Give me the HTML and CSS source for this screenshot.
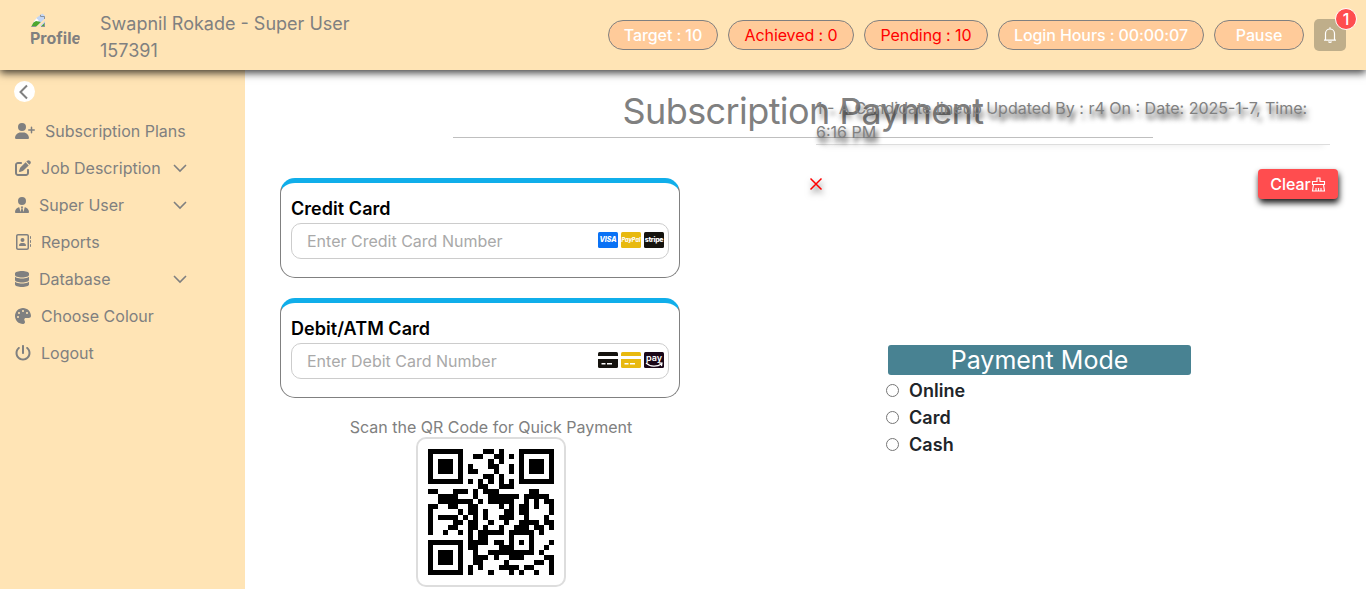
FILE: index.html
```html
<!DOCTYPE html>
<html lang="en">
<head>
<meta charset="utf-8">
<title>Subscription Payment</title>
<link rel="stylesheet" href="styles.css">
</head>
<body>
<header class="topbar">
  <div class="avatar">
    <svg class="avatar-icon" width="16" height="16" viewBox="0 0 16 16"><path fill="#c3d6f5" d="M1 1h10l4 4v10H1z"/><path fill="#fff" d="M3 9a2 2 0 0 1 4-1 2 2 0 0 1 1 3H3z"/><path fill="#4ea72e" d="M1 16v-3l5-3 5 1-5 5z"/><path fill="#ffe4b5" d="M6 16 15.500 7v2.500L9 16z"/><path fill="#4ea72e" d="M11 15.500l4-4v4z"/><path fill="none" stroke="#8c939c" d="M10.500 1.500v4h4M14.500 5.500V8M11 15.500h3.500V12M1 15.500h5"/></svg>
    <span class="avatar-alt">Profile</span>
  </div>
  <div class="who"><div>Swapnil Rokade - Super User</div><div>157391</div></div>
  <div class="stats">
    <div class="pill target">Target : 10</div>
    <div class="pill alert achieved">Achieved : 0</div>
    <div class="pill alert pending">Pending : 10</div>
    <div class="pill hours">Login Hours : 00:00:07</div>
    <div class="pill pause">Pause</div>
    <div class="bell">
      <svg width="16" height="18" viewBox="0 0 16 18" fill="none" stroke="#fff" stroke-width="1.200"><path d="M2 14.200h12M3.500 14V7.500a4.500 4.500 0 0 1 9 0V14M8 3V1.200M6.500 15.500a1.600 1.300 0 0 0 3 0"/></svg>
      <span class="badge">1</span>
    </div>
  </div>
</header>
<div class="shell">
  <nav class="sidebar">
    <div class="collapse"><svg width="21" height="21" viewBox="0 0 21 21" fill="none" stroke="#808080" stroke-width="2"><path d="M13 4.500 6.500 11l6.500 6.500"/></svg></div>
    <a class="item"><svg width="20" height="16" viewBox="0 0 640 512"><path d="M96 128a128 128 0 1 1 256 0A128 128 0 1 1 96 128zM0 482.300C0 383.800 79.800 304 178.300 304h91.400C368.200 304 448 383.800 448 482.300c0 16.400-13.300 29.700-29.700 29.700H29.700C13.300 512 0 498.700 0 482.300zM504 312V248H440c-13.300 0-24-10.700-24-24s10.700-24 24-24h64V136c0-13.300 10.700-24 24-24s24 10.700 24 24v64h64c13.300 0 24 10.700 24 24s-10.700 24-24 24H552v64c0 13.300-10.700 24-24 24s-24-10.700-24-24z"/></svg><span>Subscription Plans</span></a>
    <a class="item"><svg width="16" height="16" viewBox="0 0 512 512"><path d="M471.600 21.700c-21.900-21.900-57.300-21.900-79.200 0L362.300 51.700l97.900 97.900 30.100-30.100c21.900-21.900 21.900-57.300 0-79.200L471.600 21.700zm-299.200 220c-6.100 6.100-10.800 13.600-13.500 21.900l-29.600 88.800c-2.900 8.600-.6 18.100 5.800 24.600s15.900 8.700 24.600 5.800l88.800-29.600c8.200-2.700 15.700-7.400 21.900-13.500L437.700 172.300 339.700 74.300 172.400 241.700zM96 64C43 64 0 107 0 160V416c0 53 43 96 96 96H352c53 0 96-43 96-96V320c0-17.700-14.300-32-32-32s-32 14.300-32 32v96c0 17.700-14.300 32-32 32H96c-17.700 0-32-14.300-32-32V160c0-17.700 14.300-32 32-32h96c17.700 0 32-14.300 32-32s-14.300-32-32-32H96z"/></svg><span>Job Description</span><svg class="chev" width="14" height="16" viewBox="0 0 14 16"><path d="M1 5l6 6 6-6"/></svg></a>
    <a class="item"><svg width="14" height="16" viewBox="0 0 448 512"><path d="M96 128a128 128 0 1 0 256 0A128 128 0 1 0 96 128zm94.500 200.200l18.600 31L175.800 483.100l-36-146.900c-2-8.100-9.800-13.400-17.900-11.300C51.900 342.400 0 405.800 0 481.300c0 17 13.800 30.700 30.700 30.700H417.300c17 0 30.700-13.800 30.700-30.700c0-75.500-51.900-138.900-121.900-156.400c-8.100-2-15.900 3.300-17.900 11.300l-36 146.900L238.900 359.200l18.600-31c6.400-10.700-1.300-24.200-13.700-24.200H204.300c-12.400 0-20.100 13.600-13.700 24.200z"/></svg><span>Super User</span><svg class="chev" width="14" height="16" viewBox="0 0 14 16"><path d="M1 5l6 6 6-6"/></svg></a>
    <a class="item"><svg width="16" height="16" viewBox="0 0 512 512"><path d="M384 48c8.800 0 16 7.200 16 16V448c0 8.800-7.200 16-16 16H96c-8.800 0-16-7.200-16-16V64c0-8.800 7.200-16 16-16H384zM96 0C60.700 0 32 28.700 32 64V448c0 35.300 28.700 64 64 64H384c35.300 0 64-28.700 64-64V64c0-35.300-28.700-64-64-64H96zM240 256a64 64 0 1 0 0-128 64 64 0 1 0 0 128zm-32 32c-44.200 0-80 35.800-80 80c0 8.800 7.200 16 16 16H336c8.800 0 16-7.200 16-16c0-44.200-35.800-80-80-80H208zM512 80c0-8.800-7.200-16-16-16s-16 7.200-16 16v64c0 8.800 7.200 16 16 16s16-7.200 16-16V80zM496 192c-8.800 0-16 7.200-16 16v64c0 8.800 7.200 16 16 16s16-7.200 16-16V208c0-8.800-7.200-16-16-16zm16 144c0-8.800-7.200-16-16-16s-16 7.200-16 16v64c0 8.800 7.200 16 16 16s16-7.200 16-16V336z"/></svg><span>Reports</span></a>
    <a class="item"><svg width="14" height="16" viewBox="0 0 448 512"><path d="M448 80v48c0 44.200-100.300 80-224 80S0 172.200 0 128V80C0 35.800 100.300 0 224 0S448 35.800 448 80zM393.200 214.700c20.800-7.400 39.900-16.900 54.800-28.600V288c0 44.200-100.300 80-224 80S0 332.200 0 288V186.100c14.900 11.800 34 21.200 54.800 28.600C99.700 230.700 159.500 240 224 240s124.300-9.300 169.200-25.300zM0 346.100c14.900 11.800 34 21.200 54.800 28.600C99.700 390.700 159.500 400 224 400s124.300-9.300 169.200-25.300c20.800-7.400 39.900-16.900 54.800-28.600V432c0 44.200-100.300 80-224 80S0 476.200 0 432V346.100z"/></svg><span>Database</span><svg class="chev" width="14" height="16" viewBox="0 0 14 16"><path d="M1 5l6 6 6-6"/></svg></a>
    <a class="item"><svg width="16" height="16" viewBox="0 0 512 512"><path d="M512 256c0 .9 0 1.800 0 2.700c-.4 36.500-33.600 61.300-70.100 61.300H344c-26.500 0-48 21.500-48 48c0 3.400 .4 6.700 1 9.900c2.100 10.200 6.500 20 10.800 29.900c6.100 13.800 12.100 27.500 12.100 42c0 31.800-21.600 60.700-53.400 62c-3.500 .1-7 .2-10.600 .2C114.600 512 0 397.400 0 256S114.600 0 256 0S512 114.600 512 256zM128 288a32 32 0 1 0 -64 0 32 32 0 1 0 64 0zm0-96a32 32 0 1 0 0-64 32 32 0 1 0 0 64zM288 96a32 32 0 1 0 -64 0 32 32 0 1 0 64 0zm96 96a32 32 0 1 0 0-64 32 32 0 1 0 0 64z"/></svg><span>Choose Colour</span></a>
    <a class="item"><svg width="16" height="16" viewBox="0 0 512 512"><path d="M288 32c0-17.700-14.300-32-32-32s-32 14.300-32 32V256c0 17.700 14.300 32 32 32s32-14.300 32-32V32zM143.500 120.600c13.600-11.300 15.400-31.500 4.100-45.100s-31.500-15.400-45.100-4.100C49.700 115.400 16 181.800 16 256c0 132.500 107.500 240 240 240s240-107.500 240-240c0-74.200-33.800-140.600-86.600-184.600c-13.600-11.300-33.800-9.400-45.100 4.100s-9.400 33.800 4.100 45.100c38.900 32.300 63.500 81 63.500 135.400c0 97.200-78.800 176-176 176s-176-78.800-176-176c0-54.400 24.700-103.100 63.500-135.400z"/></svg><span>Logout</span></a>
  </nav>
  <main class="content">
    <h1 class="title">Subscription Payment</h1>
    <div class="columns">
      <section class="methods">
        <div class="card">
          <div class="label">Credit Card</div>
          <div class="field"><span>Enter Credit Card Number</span>
            <div class="brands">
              <span class="brand visa">VISA</span><span class="brand paypal">PayPal</span><span class="brand stripe">stripe</span>
            </div>
          </div>
        </div>
        <div class="card">
          <div class="label">Debit/ATM Card</div>
          <div class="field"><span>Enter Debit Card Number</span>
            <div class="brands">
              <svg width="20" height="16" viewBox="0 0 20 16"><rect width="20" height="16" rx="1.500" fill="#15130e"/><path fill="#fff" d="M0 4h20v3H0zM3.500 11h4v1.500h-4zM9 11h5v1.500H9z"/></svg>
              <svg width="20" height="16" viewBox="0 0 20 16"><rect width="20" height="16" rx="1.500" fill="#e8b90f"/><path fill="#fff" d="M0 4h20v3H0zM3.500 11h4v1.500h-4zM9 11h5v1.500H9z"/></svg>
              <span class="brand amazon">pay<svg width="18" height="6" viewBox="0 0 18 6" fill="none" stroke="#fff" stroke-width="1.200"><path d="M1 1c4 4 11 4 15.500 1M14 .8l3 .3-.5 3"/></svg></span>
            </div>
          </div>
        </div>
        <div class="scan">Scan the QR Code for Quick Payment</div>
        <div class="qr"><svg id="qr" width="126" height="126" viewBox="0 0 25 25" shape-rendering="crispEdges"></svg></div>
      </section>
      <section class="mode">
        <h2 class="mode-title">Payment Mode</h2>
        <label class="option"><input type="radio" name="mode">Online</label>
        <label class="option"><input type="radio" name="mode">Card</label>
        <label class="option"><input type="radio" name="mode">Cash</label>
      </section>
    </div>
  </main>
</div>
<aside class="notice">
  <p class="notice-text">1 - A Candidate lineup Updated By : r4 On : Date: 2025-1-7, Time: 6:16 PM</p>
  <div class="notice-actions">
    <svg class="dismiss" width="14" height="14" viewBox="0 0 14 14"><path d="M1.500 1.500l11 11M12.500 1.500l-11 11" stroke="red" stroke-width="1.500"/></svg>
    <button class="clear">Clear<svg width="15" height="15" viewBox="0 0 15 15" fill="none" stroke="#fff" stroke-width="1.100"><path d="M6 4.500V1h3v3.500h4.500v3h-12v-3zM2.500 7.500 1.500 14h12l-1-6.500M5 14v-3M7.500 14v-3M10 14v-3"/></svg></button>
  </div>
</aside>
<script src="qr.js"></script>
</body>
</html>
```
FILE: styles.css
```css
* { box-sizing: border-box; }
body { margin: 0; height: 589px; overflow: hidden; font: 16px/24px Inter, "Liberation Sans", sans-serif; color: #808080; background: #fff; }
.topbar { position: relative; z-index: 2; height: 70px; display: flex; align-items: center; padding: 0 20px 0 30px; background: #ffe4b5; box-shadow: 0 3px 8px rgba(0,0,0,.75); }
.avatar { width: 50px; height: 50px; border-radius: 50%; overflow: hidden; display: flex; flex-direction: column; font-weight: 700; white-space: nowrap; padding-top: 1px; }
.avatar-icon { flex: none; display: block; }
.avatar-alt { line-height: 22px; }
.who { margin-left: 20px; padding-top: 4px; font-size: 18px; line-height: 27px; }
.stats { display: flex; gap: 10px; margin-left: auto; align-items: center; }
.pill { height: 30px; border: 1px solid #808080; border-radius: 15px; background: #ffcb9a; color: #fff; font-weight: 500; line-height: 28px; text-align: center; white-space: nowrap; letter-spacing: -0.1px; }
.alert { color: red; font-weight: 400; }
.target { width: 110px; }
.achieved { width: 126px; }
.pending { width: 124px; }
.hours { width: 206px; }
.pause { width: 90px; }
.bell { position: relative; width: 32px; height: 32px; border-radius: 5px; background: #bfae8a; display: grid; place-items: center; }
.badge { position: absolute; right: -11px; top: -11px; width: 22px; height: 22px; border-radius: 50%; border: 1px solid #fff; background: #ff4d4f; color: #fff; font-size: 16px; font-weight: 500; line-height: 20px; text-align: center; }
.shell { display: flex; height: 519px; }
.sidebar { width: 245px; background: #ffe4b5; padding: 11px 15px; }
.collapse { width: 21px; height: 21px; margin-left: -1px; margin-bottom: 10px; border-radius: 50%; background: #fff; }
.collapse svg { display: block; }
.item { display: flex; align-items: center; height: 37px; width: 172px; gap: 10px; fill: #808080; white-space: nowrap; }
.chev { margin-left: auto; fill: none; stroke: #808080; stroke-width: 1.600; }
.content { flex: 1; padding: 20px 35px 0; }
.title { width: 700px; margin: 0 0 40px 173px; height: 48px; border-bottom: 1px solid #bfbfbf; text-align: center; font-size: 36px; line-height: 43px; font-weight: 400; letter-spacing: -0.6px; }
.columns { display: flex; }
.methods { width: 422px; display: flex; flex-direction: column; }
.card { width: 400px; height: 100px; margin-bottom: 20px; padding: 12px 10px; border: 1px solid #808080; border-top: 5px solid #10aeea; border-radius: 15px; }
.label { color: #000; font-size: 18px; line-height: 27px; font-weight: 600; margin-bottom: 1px; letter-spacing: 0.05px; }
.field { height: 36px; display: flex; align-items: center; justify-content: space-between; padding: 0 4px 0 15px; border: 1px solid #ccc; border-radius: 10px; color: #a9a9a9; }
.brands { display: flex; gap: 3px; margin-top: -2px; }
.brand { width: 20px; height: 16px; border-radius: 1.500px; color: #fff; font-size: 7px; line-height: 16px; font-weight: 800; display: flex; justify-content: center; overflow: hidden; }
.visa { background: #0a72f5; font-style: italic; }
.paypal { background: #e8b90f; font-size: 5.500px; font-style: italic; }
.stripe { background: #15130e; font-size: 7px; letter-spacing: -0.3px; }
.amazon { background: #1a0718; flex-direction: column; align-items: center; font-size: 9px; line-height: 9px; font-weight: 600; }
.scan { text-align: center; line-height: 24px; margin-top: -3px; margin-bottom: -2px; }
.qr { align-self: center; width: 150px; height: 150px; padding: 10px; border: 2px solid #ddd; border-radius: 10px; }
.qr svg { display: block; }
.mode { width: 303px; margin-left: 186px; margin-top: 167px; }
.mode-title { margin: 0 0 2px; height: 30px; border-radius: 3px; background: #488292; color: #fff; font-size: 25px; line-height: 30px; font-weight: 400; text-align: center; }
.option { display: flex; align-items: center; height: 27px; color: #212529; font-size: 18px; font-weight: 600; letter-spacing: 0.05px; }
.option input { width: 13px; height: 13px; margin: 0 10px 0 -2px; }
.notice { position: absolute; z-index: 1; left: 809px; top: 96px; width: 529px; }
.notice-text { margin: 0 8px 0 7px; height: 49px; border-bottom: 1px solid #ddd; text-shadow: 2px 5px 5px rgba(0,0,0,.8); box-shadow: 0 8px 6px -6px rgba(0,0,0,.06); }
.notice-actions { display: flex; justify-content: space-between; align-items: center; margin-top: 24px; }
.dismiss { filter: drop-shadow(1px 4px 3px rgba(0,0,0,.6)); }
.clear { display: flex; align-items: center; justify-content: center; width: 80px; height: 30px; padding: 0; border: 0; border-radius: 4px; background: #ff4d4f; color: #fff; font: 500 16px Inter, sans-serif; box-shadow: 1px 4px 6px rgba(0,0,0,.9); }
```
FILE: qr.js
```js
// Version 2, level L QR encoder (byte mode).
(function () {
  const N = 25, DATA = 34, EC = 10, MASK = 5;
  const text = 'https://example.com/payment';
  const bits = [];
  const put = (v, n) => { for (let i = n - 1; i >= 0; i--) bits.push((v >> i) & 1); };
  put(4, 4); put(text.length, 8);
  for (const c of text) put(c.charCodeAt(0), 8);
  put(0, 4);
  while (bits.length % 8) bits.push(0);
  for (let p = 0; bits.length < DATA * 8; p++) put(p % 2 ? 0x11 : 0xec, 8);
  const words = [];
  for (let i = 0; i < bits.length; i += 8) words.push(parseInt(bits.slice(i, i + 8).join(''), 2));
  const mul = (a, b) => { let z = 0; for (let i = 7; i >= 0; i--) { z = (z << 1) ^ ((z >> 7) * 0x11d); z ^= ((b >> i) & 1) * a; } return z & 255; };
  const gen = new Array(EC).fill(0); gen[EC - 1] = 1;
  for (let i = 0, root = 1; i < EC; i++) {
    for (let j = 0; j < EC; j++) { gen[j] = mul(gen[j], root); if (j + 1 < EC) gen[j] ^= gen[j + 1]; }
    root = mul(root, 2);
  }
  const rem = new Array(EC).fill(0);
  for (const w of words) { const f = w ^ rem.shift(); rem.push(0); gen.forEach((g, i) => { rem[i] ^= mul(g, f); }); }
  const all = words.concat(rem);
  const flip = (r, c) => (r * c) % 2 + (r * c) % 3 === 0;
  const g = Array.from({ length: N }, () => new Array(N).fill(null));
  const finder = (y, x) => { for (let r = -1; r < 8; r++) for (let c = -1; c < 8; c++) {
    if (g[y + r] === undefined || g[y + r][x + c] === undefined) continue;
    const d = Math.max(Math.abs(r - 3), Math.abs(c - 3)); g[y + r][x + c] = +(d !== 2 && d !== 4); } };
  finder(0, 0); finder(0, N - 7); finder(N - 7, 0);
  for (let r = -2; r < 3; r++) for (let c = -2; c < 3; c++) g[18 + r][18 + c] = +(Math.max(Math.abs(r), Math.abs(c)) !== 1);
  for (let i = 8; i < N - 8; i++) g[6][i] = g[i][6] = +(i % 2 === 0);
  const d = 8 | MASK; let e = d;
  for (let i = 0; i < 10; i++) e = (e << 1) ^ ((e >> 9) * 0x537);
  const f = ((d << 10) | e) ^ 0x5412, b = i => (f >> i) & 1;
  for (let i = 0; i < 6; i++) g[i][8] = b(i);
  g[7][8] = b(6); g[8][8] = b(7); g[8][7] = b(8);
  for (let i = 9; i < 15; i++) g[8][14 - i] = b(i);
  for (let i = 0; i < 8; i++) g[8][N - 1 - i] = b(i);
  for (let i = 8; i < 15; i++) g[N - 15 + i][8] = b(i);
  g[N - 8][8] = 1;
  let k = 0;
  for (let right = N - 1; right >= 1; right -= 2) {
    if (right === 6) right = 5;
    for (let v = 0; v < N; v++) for (let j = 0; j < 2; j++) {
      const x = right - j, up = right > 6 ? (N - 1 - right) % 4 === 0 : (right === 5 ? (N - 1 - 6) % 4 === 0 : (N - 2 - right) % 4 === 2);
      const y = ((right + 1) & 2) === 0 ? N - 1 - v : v;
      if (g[y][x] !== null) continue;
      const bit = k < all.length * 8 ? (all[k >> 3] >> (7 - (k & 7))) & 1 : 0;
      k++; g[y][x] = bit ^ +flip(y, x);
    }
  }
  let path = '';
  g.forEach((row, y) => row.forEach((v, x) => { if (v) path += `M${x} ${y}h1v1h-1z`; }));
  const el = document.createElementNS('http://www.w3.org/2000/svg', 'path');
  el.setAttribute('d', path);
  document.getElementById('qr').appendChild(el);
})();
```
